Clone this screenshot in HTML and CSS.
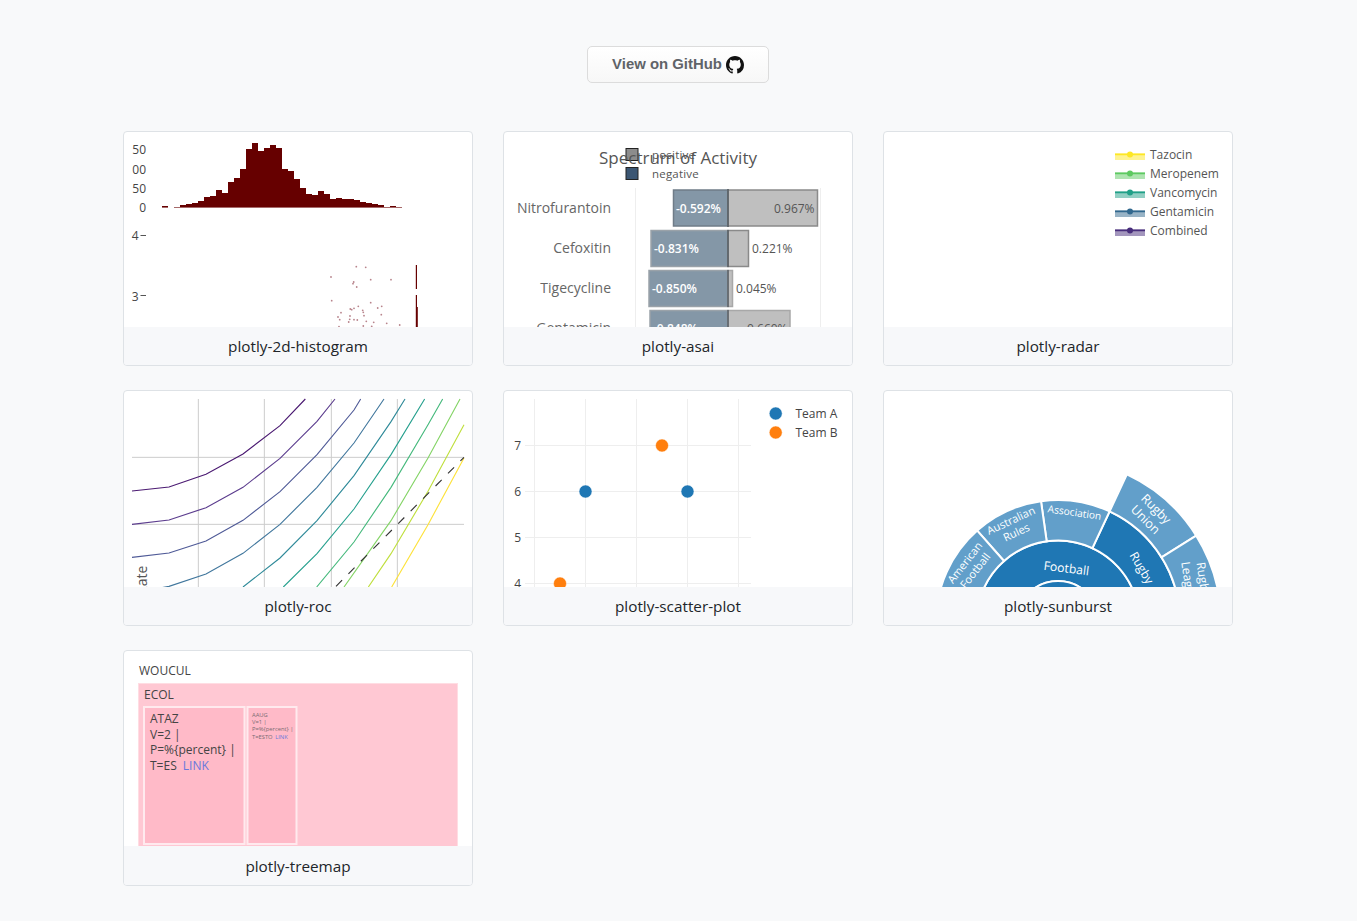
FILE: index.html
```html
<!DOCTYPE html>
<html lang="en">
<head>
    <meta charset="UTF-8">
    <meta name="viewport" content="width=device-width, initial-scale=1.0">
    <title>Plotly Chart Examples</title>
    <link rel="stylesheet" href="styles.css">
</head>
<body>
    <header class="top">
        <a class="github-btn" href="#">
            <span>View on GitHub</span>
            <svg class="github-icon" viewBox="0 0 16 16"><path fill-rule="evenodd" d="M8 0C3.58 0 0 3.58 0 8c0 3.54 2.29 6.53 5.47 7.59.4.07.55-.17.55-.38 0-.19-.01-.82-.01-1.49-2.01.37-2.53-.49-2.69-.94-.09-.23-.48-.94-.82-1.13-.28-.15-.68-.52-.01-.53.63-.01 1.08.58 1.23.82.72 1.21 1.87.87 2.33.66.07-.52.28-.87.51-1.07-1.78-.2-3.64-.89-3.64-3.95 0-.87.31-1.59.82-2.15-.08-.2-.36-1.02.08-2.12 0 0 .67-.21 2.2.82.64-.18 1.32-.27 2-.27.68 0 1.36.09 2 .27 1.53-1.04 2.2-.82 2.2-.82.44 1.1.16 1.92.08 2.12.51.56.82 1.27.82 2.15 0 3.07-1.87 3.75-3.65 3.95.29.25.54.73.54 1.48 0 1.07-.01 1.93-.01 2.2 0 .21.15.46.55.38A8.013 8.013 0 0016 8c0-4.42-3.58-8-8-8z"/></svg>
        </a>
    </header>

    <main class="grid">
        <!-- 2d histogram -->
        <a class="card" href="#">
            <svg class="thumb" viewBox="124 132 348 195.5">
                <path class="hist-base" d="M162 207.5h6M174 207.5h228"/>
                <path class="hist-bar" d="M162 207V206H168V207ZM180 207V205H186V204H192V203H198V201H204V197H210V196H216V190H222V193H228V182H234V178H240V169H246V149H252V143H258V151H264V148H270V145H276V148H282V169H288V171H294V179H300V188H306V194H312V195H318V191H324V194H330V199H336V198H342V199H354V200H360V202H366V203H372V204H378V205H384V207H390V206H396V207Z"/>
                <path class="hist-bar" d="M415.8 265h1.2v24h-1.2ZM415.8 295h1.2v12h.8v20.5h-2Z"/>
                <g class="hist-tick-labels">
                    <text x="146" y="154">50</text>
                    <text x="146" y="174">00</text>
                    <text x="146" y="193">50</text>
                    <text x="146" y="212">0</text>
                    <text x="138.5" y="240">4</text>
                    <text x="138.5" y="300.5">3</text>
                </g>
                <path class="hist-tick" d="M140.5 235.5h5.5M140.5 295.5h5.5"/>
                <g class="hist-dots">
                    <circle cx="331" cy="277" r=".9"/><circle cx="356.3" cy="266.7" r=".9"/><circle cx="365.7" cy="267.3" r=".9"/>
                    <circle cx="353.7" cy="282" r=".9"/><circle cx="353" cy="283.7" r=".9"/><circle cx="356.7" cy="287" r=".9"/>
                    <circle cx="370.7" cy="279.7" r=".9"/><circle cx="391" cy="279.7" r=".9"/><circle cx="331.7" cy="300.7" r=".9"/>
                    <circle cx="370.7" cy="302.7" r=".9"/><circle cx="358.3" cy="306.3" r=".9"/><circle cx="350.3" cy="309" r=".9"/>
                    <circle cx="351.7" cy="309.7" r=".9"/><circle cx="354" cy="308.3" r=".9"/><circle cx="362.7" cy="310.3" r=".9"/>
                    <circle cx="363.3" cy="312.3" r=".9"/><circle cx="377.7" cy="308" r=".9"/><circle cx="381.7" cy="306.3" r=".9"/>
                    <circle cx="341" cy="312.7" r=".9"/><circle cx="338" cy="317" r=".9"/><circle cx="339.7" cy="319.7" r=".9"/>
                    <circle cx="350" cy="316" r=".9"/><circle cx="349.7" cy="319.3" r=".9"/><circle cx="348.7" cy="322" r=".9"/>
                    <circle cx="354" cy="319.7" r=".9"/><circle cx="357.3" cy="320" r=".9"/><circle cx="364" cy="315.7" r=".9"/>
                    <circle cx="381.3" cy="314.7" r=".9"/><circle cx="366.3" cy="321.3" r=".9"/><circle cx="373.7" cy="322.3" r=".9"/>
                    <circle cx="386.7" cy="323.3" r=".9"/><circle cx="399.7" cy="325" r=".9"/><circle cx="339" cy="326.7" r=".9"/>
                    <circle cx="363.3" cy="326" r=".9"/><circle cx="371.7" cy="326.3" r=".9"/>
                </g>
            </svg>
            <div class="card-name">plotly-2d-histogram</div>
        </a>

        <!-- asai -->
        <a class="card" href="#">
            <svg class="thumb" viewBox="504 132 348 195.5">
                <path class="asai-grid" d="M635.5 188v140M820.5 188v140"/>
                <rect class="asai-neg" x="673.5" y="190" width="54.5" height="36"/>
                <rect class="asai-pos" x="728" y="190" width="89.5" height="36"/>
                <rect class="asai-neg light" x="651" y="230.5" width="77" height="36"/>
                <rect class="asai-pos" x="728" y="230.5" width="20.5" height="36"/>
                <rect class="asai-neg light" x="649" y="270.5" width="79" height="36"/>
                <rect class="asai-pos light" x="728" y="270.5" width="4.5" height="36"/>
                <rect class="asai-neg light" x="650" y="310.5" width="78" height="36"/>
                <rect class="asai-pos light" x="728" y="310.5" width="62" height="36"/>
                <path class="asai-center" d="M728 189v38M728 230v37M728 270v37M728 310v18"/>
                <g class="asai-cats">
                    <text x="611" y="213">Nitrofurantoin</text>
                    <text x="611" y="253">Cefoxitin</text>
                    <text x="611" y="293">Tigecycline</text>
                    <text x="611" y="333">Gentamicin</text>
                </g>
                <g class="asai-vals">
                    <text class="in" x="676" y="212.5">-0.592%</text>
                    <text x="774" y="212.5">0.967%</text>
                    <text class="in" x="654" y="252.5">-0.831%</text>
                    <text x="752" y="252.5">0.221%</text>
                    <text class="in" x="652" y="292.5">-0.850%</text>
                    <text x="736" y="292.5">0.045%</text>
                    <text class="in" x="653" y="332.5">-0.848%</text>
                    <text x="747" y="332.5">0.660%</text>
                </g>
                <rect class="asai-swatch pos" x="626" y="148.5" width="12" height="12"/>
                <rect class="asai-swatch neg" x="626" y="167.5" width="12" height="12"/>
                <text class="asai-legend" x="652" y="159">positive</text>
                <text class="asai-legend" x="652" y="178">negative</text>
                <text class="asai-title" x="678" y="164">Spectrum of Activity</text>
            </svg>
            <div class="card-name">plotly-asai</div>
        </a>

        <!-- radar -->
        <a class="card" href="#">
            <svg class="thumb" viewBox="884 132 348 195.5">
                <g class="radar-key" fill="#fde725" stroke="#fde725">
                    <rect x="1115" y="153" width="30" height="7"/><path d="M1115 154.5h30"/><circle cx="1130" cy="154.5" r="3"/>
                    <text x="1150" y="159">Tazocin</text>
                </g>
                <g class="radar-key" fill="#5ec962" stroke="#5ec962">
                    <rect x="1115" y="172" width="30" height="7"/><path d="M1115 173.5h30"/><circle cx="1130" cy="173.5" r="3"/>
                    <text x="1150" y="178">Meropenem</text>
                </g>
                <g class="radar-key" fill="#21a088" stroke="#21a088">
                    <rect x="1115" y="191" width="30" height="7"/><path d="M1115 192.5h30"/><circle cx="1130" cy="192.5" r="3"/>
                    <text x="1150" y="197">Vancomycin</text>
                </g>
                <g class="radar-key" fill="#31688e" stroke="#31688e">
                    <rect x="1115" y="210" width="30" height="7"/><path d="M1115 211.5h30"/><circle cx="1130" cy="211.5" r="3"/>
                    <text x="1150" y="216">Gentamicin</text>
                </g>
                <g class="radar-key" fill="#472d7b" stroke="#472d7b">
                    <rect x="1115" y="229" width="30" height="7"/><path d="M1115 230.5h30"/><circle cx="1130" cy="230.5" r="3"/>
                    <text x="1150" y="235">Combined</text>
                </g>
            </svg>
            <div class="card-name">plotly-radar</div>
        </a>

        <!-- roc, drawn on a 3x grid -->
        <a class="card" href="#">
            <svg class="thumb" viewBox="12 9 1044 586.5">
                <path class="roc-grid" d="M235 33V597M433 33V597M634 33V597M832 33V597M36 208H1032M36 409H1032"/>
                <path class="roc-line" stroke="#4b1a72" d="M36 309L147 297 258 259 369 198 480 113 556 33"/>
                <path class="roc-line" stroke="#5c3d8e" d="M36 409L147 396 258 359 369 298 480 211 591 100 645 33"/>
                <path class="roc-line" stroke="#4f5a97" d="M36 508L147 495 258 459 369 397 480 311 591 200 702 66 722 33"/>
                <path class="roc-line" stroke="#41779d" d="M120 600L147 595 258 558 369 496 480 409 591 298 702 165 792 33"/>
                <path class="roc-line" stroke="#2f8a99" d="M369 597L480 510 591 398 702 263 813 101 855 33"/>
                <path class="roc-line" stroke="#26a08e" d="M490 597L591 497 702 363 813 200 914 33"/>
                <path class="roc-line" stroke="#45b97c" d="M590 597L702 462 813 298 924 110 968 33"/>
                <path class="roc-line" stroke="#84d466" d="M672 597L813 398 924 210 1020 33"/>
                <path class="roc-line" stroke="#bfdf3c" d="M745 597L813 497 924 310 1032 110"/>
                <path class="roc-line" stroke="#fde23a" d="M815 597L924 410 1032 210"/>
                <path class="roc-dash" d="M648 595L1032 208"/>
                <text class="roc-axis" transform="translate(82 533) rotate(-90)">True Positive Rate</text>
            </svg>
            <div class="card-name">plotly-roc</div>
        </a>

        <!-- scatter -->
        <a class="card" href="#">
            <svg class="thumb" viewBox="504 391 348 195.5">
                <path class="scatter-grid" d="M534.5 399v188M585.5 399v188M636.5 399v188M687.5 399v188M738.5 399v188M525 445.5h226M525 491.5h226M525 537.5h226M525 583.5h226"/>
                <g class="scatter-ticks">
                    <text x="521" y="449.5">7</text>
                    <text x="521" y="495.5">6</text>
                    <text x="521" y="541.5">5</text>
                    <text x="521" y="587.5">4</text>
                </g>
                <circle class="dot-a" cx="585.5" cy="491.5" r="6.5"/>
                <circle class="dot-a" cx="687.5" cy="491.5" r="6.5"/>
                <circle class="dot-b" cx="662" cy="445.5" r="6.5"/>
                <circle class="dot-b" cx="560" cy="583.5" r="6.5"/>
                <circle class="dot-a" cx="775.7" cy="413.5" r="6.5"/>
                <circle class="dot-b" cx="775.7" cy="432.5" r="6.5"/>
                <text class="scatter-key" x="795.5" y="418">Team A</text>
                <text class="scatter-key" x="795.5" y="437">Team B</text>
            </svg>
            <div class="card-name">plotly-scatter-plot</div>
        </a>

        <!-- sunburst -->
        <a class="card" href="#">
            <svg class="thumb" viewBox="884 391 348 195.5">
                <path class="sun-dark" d="M976.5 622A81.5 81.5 0 0 1 1139.5 622L1099 622A41 41 0 0 0 1017 622Z"/>
                <path class="sun-dark" d="M1092.4 548.1A81.5 81.5 0 0 1 1128.6 662.8L1163.7 683A122 122 0 0 0 1109.6 511.4Z"/>
                <path class="sun-light" d="M1046.7 541.3A81.5 81.5 0 0 1 1092.4 548.1L1109.6 511.4A122 122 0 0 0 1041 501.2Z"/>
                <path class="sun-light" d="M1004 561A81.5 81.5 0 0 1 1046.7 541.3L1041 501.2A122 122 0 0 0 977.2 530.6Z"/>
                <path class="sun-light" d="M976.5 622A81.5 81.5 0 0 1 1004 561L977.2 530.6A122 122 0 0 0 936 622Z"/>
                <path class="sun-light" d="M1109.6 511.4A122 122 0 0 1 1161.5 557.3L1196.2 535.6A163 163 0 0 0 1126.9 474.3Z"/>
                <path class="sun-light" d="M1161.5 557.3A122 122 0 0 1 1163.7 683L1199.2 703.5A163 163 0 0 0 1196.2 535.6Z"/>
                <circle class="sun-dark" cx="1058" cy="622" r="41"/>
                <g class="sun-labels">
                    <text class="big" transform="translate(1066 572.5) rotate(7)">Football</text>
                    <text class="small" transform="translate(1074 516) rotate(8)">Association</text>
                    <text class="mid" transform="translate(1012.5 524) rotate(-25)"><tspan x="0" y="0">Australian</tspan><tspan x="0" y="13">Rules</tspan></text>
                    <text class="mid" transform="translate(968 565) rotate(-52)"><tspan x="0" y="0">American</tspan><tspan x="0" y="13">Football</tspan></text>
                    <text class="wide" transform="translate(1153 512) rotate(45)"><tspan x="0" y="0">Rugby</tspan><tspan x="0" y="15">Union</tspan></text>
                    <text transform="translate(1138 570) rotate(60)">Rugby</text>
                    <text transform="translate(1199 580) rotate(82)"><tspan x="0" y="0">Rugby</tspan><tspan x="0" y="15">League</tspan></text>
                </g>
            </svg>
            <div class="card-name">plotly-sunburst</div>
        </a>

        <!-- treemap -->
        <a class="card" href="#">
            <svg class="thumb" viewBox="124 651 348 195.5">
                <rect class="tree-root" x="138.5" y="683.5" width="319" height="170"/>
                <rect class="tree-leaf" x="144" y="707" width="100.5" height="137"/>
                <rect class="tree-leaf" x="247.5" y="707" width="49" height="137"/>
                <text class="tree-text" x="139" y="675">WOUCUL</text>
                <text class="tree-text" x="144" y="699">ECOL</text>
                <text class="tree-text" x="150" y="723">ATAZ</text>
                <text class="tree-text" x="150" y="739">V=2 |</text>
                <text class="tree-text" x="150" y="754">P=%{percent} |</text>
                <text class="tree-text" x="150" y="770">T=ES <tspan class="tree-link" dx="3">LINK</tspan></text>
                <g class="tree-tiny">
                    <text x="252" y="716.5">AAUG</text>
                    <text x="252" y="723.5">V=1 |</text>
                    <text x="252" y="731">P=%{percent} |</text>
                    <text x="252" y="738.5">T=ESTO <tspan class="tree-link" dx="1">LINK</tspan></text>
                </g>
            </svg>
            <div class="card-name">plotly-treemap</div>
        </a>
    </main>
</body>
</html>
```

FILE: styles.css
```css
body {
    font-family: 'Open Sans', 'Noto Sans', sans-serif;
    margin: 0;
    padding: 0;
    background-color: #f8f9fa;
    color: #212529;
}

.top {
    display: flex;
    justify-content: center;
    padding: 46px 1px 47.8px 0;
}

.github-btn {
    display: flex;
    align-items: center;
    justify-content: center;
    gap: 4px;
    box-sizing: border-box;
    width: 182px;
    height: 37px;
    padding-bottom: 2px;
    font-family: 'Liberation Sans', Arial, sans-serif;
    font-weight: bold;
    font-size: 14.9px;
    color: #5f6368;
    text-decoration: none;
    background: linear-gradient(#ffffff, #f7f7f7);
    border: 1px solid #dcdcdc;
    border-radius: 5px;
}

.github-icon {
    width: 18px;
    height: 18px;
    margin-top: 3px;
    fill: #111;
}

.grid {
    display: grid;
    grid-template-columns: repeat(3, 350px);
    justify-content: center;
    column-gap: 30px;
    row-gap: 24px;
    padding: 0 1px 35px 0;
}

.card {
    display: flex;
    flex-direction: column;
    box-sizing: border-box;
    height: 235.6px;
    background-color: #fff;
    border: 1px solid #dee2e6;
    border-radius: 4px;
    overflow: hidden;
    text-decoration: none;
    color: #212529;
}

.thumb {
    display: block;
    width: 348px;
    height: 195.5px;
    flex: 0 0 auto;
}

.card-name {
    flex: 1;
    display: flex;
    align-items: center;
    justify-content: center;
    background-color: #f7f8fa;
    font-size: 15.3px;
}

/* 2d histogram */
.hist-bar { fill: #660000; }
.hist-base { stroke: #a66a6a; stroke-width: 1; fill: none; }
.hist-tick { stroke: #555; stroke-width: 1; fill: none; }
.hist-tick-labels text { font-size: 12px; fill: #444; text-anchor: end; }
.hist-dots circle { fill: #b8848c; }

/* asai */
.asai-grid { stroke: #eee; stroke-width: 1; fill: none; }
.asai-neg { fill: #8497a7; stroke: #6f7c88; stroke-width: 1.5; }
.asai-neg.light { stroke: #9aa2a9; }
.asai-pos { fill: #bfbfbf; stroke: #8a8a8a; stroke-width: 1.5; }
.asai-pos.light { stroke: #a8a8a8; }
.asai-center { stroke: #555c63; stroke-width: 1.5; fill: none; }
.asai-cats text { font-size: 14px; fill: #666; text-anchor: end; }
.asai-vals text { font-size: 12px; fill: #555; }
.asai-vals .in { fill: #fff; font-weight: 600; }
.asai-swatch { stroke: #222; stroke-width: 1; }
.asai-swatch.pos { fill: #8c8c8c; }
.asai-swatch.neg { fill: #3b5673; }
.asai-legend { font-size: 11.5px; fill: #555; letter-spacing: .2px; }
.asai-title { font-size: 17px; fill: #555; text-anchor: middle; }

/* radar */
.radar-key rect { fill-opacity: .5; stroke: none; }
.radar-key path { stroke-width: 1.5; fill: none; }
.radar-key circle { stroke: none; }
.radar-key text { font-size: 12px; fill: #555; stroke: none; }

/* roc */
.roc-grid { stroke: #ccc; stroke-width: 3; fill: none; }
.roc-line { stroke-width: 3.4; fill: none; }
.roc-dash { stroke: #333; stroke-width: 3.4; fill: none; stroke-dasharray: 26 27; }
.roc-axis { font-size: 42px; fill: #555; text-anchor: end; }

/* scatter */
.scatter-grid { stroke: #eee; stroke-width: 1; fill: none; }
.scatter-ticks text { font-size: 12px; fill: #444; text-anchor: end; }
.scatter-key { font-size: 12px; fill: #444; }
.dot-a { fill: #1f77b4; stroke: #fff; stroke-width: .5; }
.dot-b { fill: #ff7f0e; stroke: #fff; stroke-width: .5; }

/* sunburst */
.sun-dark { fill: #1f77b4; stroke: #fff; stroke-width: 2; }
.sun-light { fill: #629fca; stroke: #fff; stroke-width: 2; }
.sun-labels text { font-size: 12px; fill: #fff; text-anchor: middle; }
.sun-labels .big { font-size: 12.2px; }
.sun-labels .mid { font-size: 11px; }
.sun-labels .wide { font-size: 12.5px; }
.sun-labels .small { font-size: 10.2px; }

/* treemap */
.tree-root { fill: #ffc8d3; stroke: #ffdde3; stroke-width: 1; }
.tree-leaf { fill: #ffbac8; stroke: #ffeaee; stroke-width: 2; }
.tree-text { font-size: 12px; fill: #444; }
.tree-link { fill: #6a78dc; }
.tree-tiny text { font-size: 5.8px; fill: #7a6a72; }
```
